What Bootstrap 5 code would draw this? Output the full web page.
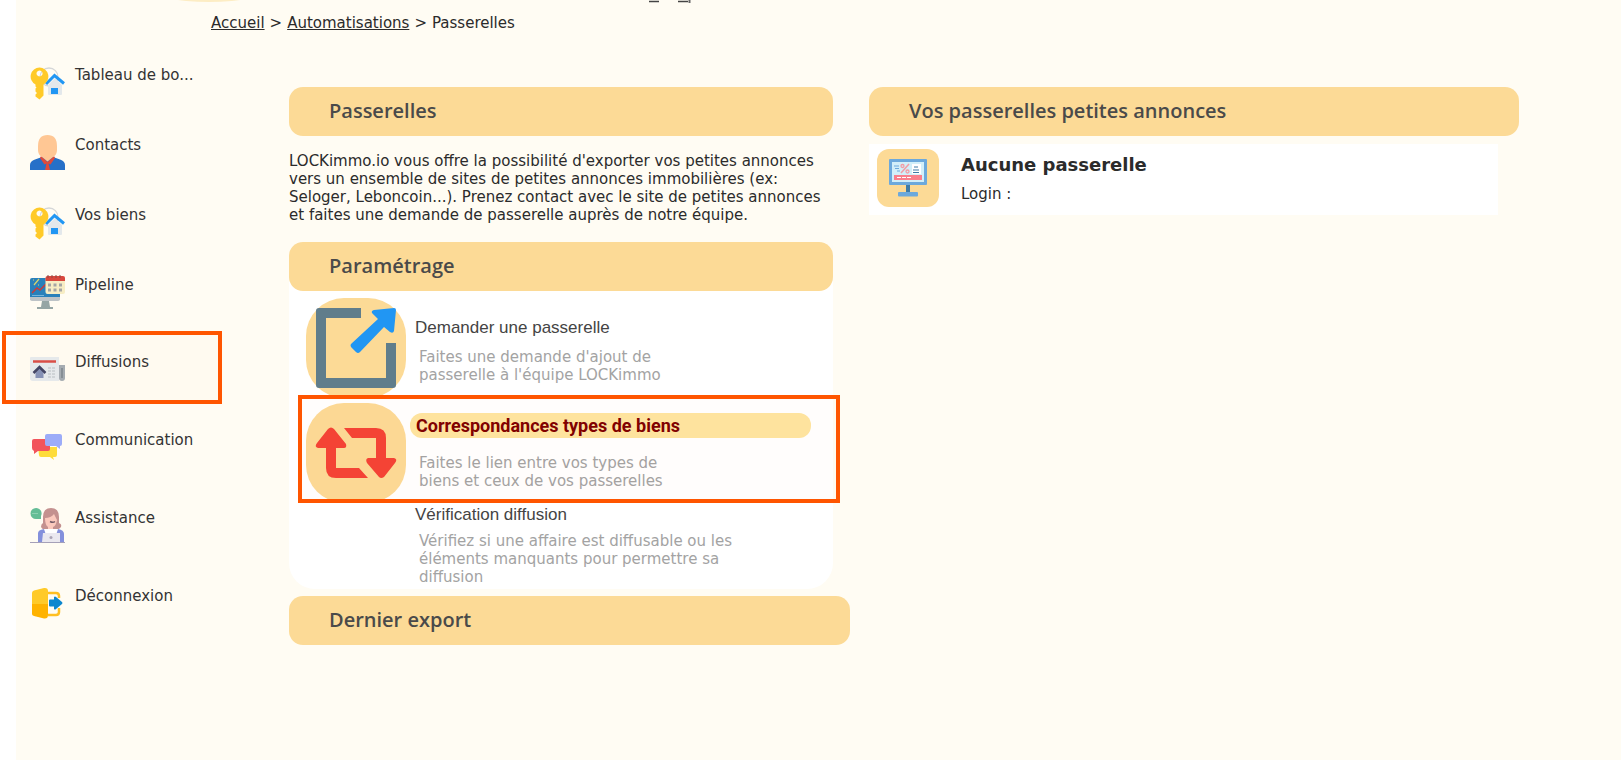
<!DOCTYPE html>
<html lang="fr">
<head>
<meta charset="utf-8">
<meta name="viewport" content="width=device-width, initial-scale=1">
<title>Passerelles</title>
<link href="https://cdn.jsdelivr.net/npm/bootstrap@5.3.0/dist/css/bootstrap.min.css" rel="stylesheet">
<style>
  body { font-family: "DejaVu Sans", Verdana, sans-serif; font-size: 15px; line-height: 18px; color: #2b2b2b; background: #fff; }
  .shell { margin-left: 16px; min-height: 100vh; background: #fffcf3; }
  a { color: inherit; }
  .topline { height: 14px; }
  .trail { padding-left: 195px; gap: 5px; }
  .side { width: 273px; padding: 33px 0 0 14px; }
  .side a { display: flex; gap: 10px; height: 35px; color: #333; text-decoration: none; position: relative; }
  .side a svg { flex: none; width: 35px; height: 35px; }
  .side a span { padding-top: 1px; }
  .side-near { display: grid; gap: 35px; }
  .side-far { display: grid; gap: 43px; padding-top: 42px; }
  .focus-box::after { content: ""; position: absolute; border: 4px solid #ff5500; background: rgba(255,85,0,.012); pointer-events: none; }
  .side .focus-box::after { left: -28px; top: -21px; width: 220px; height: 73px; }
  .main-grid { display: grid; grid-template-columns: minmax(0,561fr) minmax(0,650fr); gap: 19px; margin-right: 102px; padding-top: 55px; align-items: start; }
  .bar-title { margin: 0; height: 49px; padding-left: 40px; border-radius: 14px; background: #fcda96; color: #4a4a4a; font: 600 20px/48px "Open Sans", "Noto Sans", sans-serif; }
  .narrow { margin-right: 17px; }
  .intro { margin: 16px 17px 0 0; padding-bottom: 18px; }
  .panel { background: #fff; border-radius: 14px 14px 26px 26px; margin-bottom: 7px; padding-bottom: 3px; }
  .entries { padding-top: 7px; }
  .entry { position: relative; padding-left: 17px; gap: 4px; color: #444; }
  .entry-tall { height: 105px; }
  .entry .tile { flex: none; width: 100px; height: 100px; }
  .entry h3 { margin: 0; padding-left: 5px; font: 17px/24px "Liberation Sans", Arial, sans-serif; }
  .entry h3 a { color: inherit; text-decoration: none; }
  .entry h3.hot { width: 401px; max-width: 100%; padding-left: 6px; border-radius: 12px; background: #fee5a0; color: #800000; font: 700 18px/25px Roboto, sans-serif; }
  .entry p { margin: 0; padding-left: 9px; width: 350px; color: #a3a3a3; }
  .entry-tall p { width: 280px; }
  .first-body { padding-top: 18px; }
  .hot-body { padding-top: 10px; }
  .last-entry { margin-top: -5px; }
  .last-entry p { padding-top: 5px; }
  .entry.focus-box::after { left: 9px; right: -7px; top: -8px; height: 108px; }
  .gateway { background: #fff; margin: 8px 21px 0 0; height: 71px; padding: 5px 8px; gap: 22px; }
  .gateway svg { flex: none; width: 62px; height: 58px; }
  .gateway h3 { margin: 0; padding: 6px 0 10px; font-size: 18px; line-height: 20px; font-weight: 700; }
</style>
</head>
<body>
<svg width="0" height="0" class="d-none" aria-hidden="true">
  <symbol id="keyhouse" viewBox="0 0 35 35">
    <circle cx="19" cy="12" r="9" fill="none" stroke="#d5d7d8" stroke-width="1.3"/>
    <path d="M18 20 25 13l7 7v9q0 1-1 1H19q-1 0-1-1z" fill="#e3e8eb"/>
    <rect x="21" y="23" width="7" height="6" fill="#2196f3"/>
    <path d="M16 19 24.500 10.500 34 18.500" fill="none" stroke="#2196f3" stroke-width="3"/>
    <path fill="#ffca28" fill-rule="evenodd" d="M9.500 2.500a9 9 0 0 1 4 17v11l-4 4-4-3v-2l1.500-1.500-1.500-1.500v-3l1-1-1-1v-2a9 9 0 0 1 4-17m0 3a3 3 0 1 0 .1 0"/>
  </symbol>
</svg>
<div class="shell">
  <svg class="d-block w-100 topline" aria-hidden="true"><ellipse cx="193" cy="-12" rx="60" ry="14" fill="#fdedc4"/><path d="M633 1.500h10M662 1.500h10" stroke="#444" stroke-width="1.300"/><path d="M673.500 0v3" stroke="#666" stroke-width="2"/></svg>
  <nav class="trail d-flex" aria-label="Fil d'Ariane">
    <a href="#">Accueil</a><span>&gt;</span><a href="#">Automatisations</a><span>&gt;</span><span>Passerelles</span>
  </nav>
  <div class="d-flex align-items-start">
    <nav class="side flex-shrink-0" aria-label="Menu">
      <div class="side-near">
        <a href="#"><svg><use href="#keyhouse"/></svg><span>Tableau de bo...</span></a>
        <a href="#"><svg viewBox="0 0 35 35"><path fill="#2670c8" d="M0 35v-5q0-4 5-5.500L12 22h11l7 2.500q5 1.500 5 5.500v5z"/><path fill="#e04a3a" d="m11 21 6.500 6 6.500-6 1 2-4.500 6.500-2-1L20 35h-5l1.500-6.500-2 1L10 23z"/><path fill="#ffc794" d="M8 11q0-11 9.500-11T27 11v4q0 5-4 7l-5.500 4.500L12 22q-4-2-4-7z"/></svg><span>Contacts</span></a>
        <a href="#"><svg><use href="#keyhouse"/></svg><span>Vos biens</span></a>
        <a href="#"><svg viewBox="0 0 35 35"><path fill="#95a5a5" d="M12 26h7l1 6h3v2H7v-2h4z"/><rect y="3" width="30" height="22" rx="2" fill="#2980ba"/><path fill="#bdc3c7" d="M0 22h30v2q0 2-2 2H2q-2 0-2-2z"/><path d="m2 18 5-5 3 2 6-6" fill="none" stroke="#c63c3c" stroke-width="1.500"/><path d="m4 10 5-6M3 5h1M8 10h1" stroke="#d9d36b" stroke-width="1.200"/><path d="M2 20.500h12" stroke="#76b5dc"/><rect x="15.500" y="2" width="19.500" height="17" rx="2" fill="#f7edc4"/><path d="M15.500 6V3q0-2 2-2H33q2 0 2 2v3z" fill="#d9473d"/><path d="M18 0v3m4-3v3m4-3v3m4-3v3" stroke="#8a4a45"/><path d="M18 10h14M18 15h14" stroke="#a5a5a5" stroke-width="3" stroke-dasharray="3 2.500"/></svg><span>Pipeline</span></a>
      </div>
      <div class="side-far">
        <a href="#" class="focus-box"><svg viewBox="0 0 35 35"><path fill="#e6ebee" d="M1 5h28v24H3q-3 0-3-3V6q0-1 1-1"/><path fill="#a4adb4" d="M29 13h6v13q0 3-3 3t-3-3z"/><path d="M3 9.500h23" stroke="#d94f48" stroke-width="2.500"/><path fill="#8592b8" d="M9.500 15 15 20h-1.500v6h-8v-6H4z"/><path d="m3.500 21 6-6 6 6" fill="none" stroke="#414566" stroke-width="2.500"/><path d="M18 16h8M18 19h8M18 22h8M18 25h8" stroke="#b9c0c5" stroke-dasharray="3 1"/><path d="M32 16v10" stroke="#858f97" stroke-width="2"/></svg><span>Diffusions</span></a>
        <a href="#"><svg viewBox="0 0 35 35"><path fill="#fedc3a" d="M8 17h19v8q0 2-2 2h-2l1 3-4-3H11q-2 0-2-2z"/><path fill="#f2545b" d="M4 9h14q2 0 2 2v8q0 2-2 2H8l-4 3v-3q-2-1-2-3v-7q0-2 2-2"/><path fill="#9cacf8" d="M17 4h13q2 0 2 2v8q0 2-2 2v3l-4-3h-9q-2 0-2-2V6q0-2 2-2"/></svg><span>Communication</span></a>
        <a href="#"><svg viewBox="0 0 35 35"><path fill="#65bd96" d="M6 0a5.500 5.500 0 0 1 5 8v3H6A5.500 5.500 0 0 1 6 0"/><path d="M2.500 5.500h6" stroke="#b7e2cd" stroke-dasharray="1 1"/><path fill="#c4918f" d="M13 9q0-9 8-9t8 9v6q3 1 2 4-2 3-6 2h-8q-5 1-6-2 0-3 2-4z"/><path fill="#fbc9bd" d="M15 10q6 0 9-4 2 4 3 6-1 6-4 7v3h-5v-3q-3-2-3-9"/><path d="M20 13.500q3 1.500 5 0" stroke="#745a67" fill="none" stroke-width="1.500"/><path fill="#8490dc" d="M8 34V25q0-3 6-4h14q6 1 6 5v8z"/><path fill="#fff" d="M14 21h14l-2 6H16z"/><path fill="#eae8ef" d="M13 25h17v9H12z"/><circle cx="21" cy="29.500" r="1.500" fill="#aaa4b5"/><path d="M0 34.500h35" stroke="#a5a0b8"/></svg><span>Assistance</span></a>
        <a href="#"><svg viewBox="0 0 35 35"><path d="M18 7h8q3 0 3 3v2M29 22v4q0 3-3 3h-8" fill="none" stroke="#ffbf22" stroke-width="2.500"/><path fill="#ffca28" d="M4 4.500 14 2q4-.5 4 3v13H2V7q0-2 2-2.500"/><path fill="#ffb300" d="M2 18h16v11q0 4-4 3.500L4 30q-2-.5-2-2z"/><path fill="#0d87ce" d="M20 13.500h4V11q1-1 2 0l6 5q1 1 0 2l-6 5q-1 1-2 0v-2.500h-4q-1 0-1-1v-5q0-1 1-1"/></svg><span>Déconnexion</span></a>
      </div>
    </nav>
    <main class="main-grid flex-grow-1">
      <div>
        <h2 class="bar-title narrow">Passerelles</h2>
        <p class="intro">LOCKimmo.io vous offre la possibilité d'exporter vos petites annonces vers un ensemble de sites de petites annonces immobilières (ex: Seloger, Leboncoin...). Prenez contact avec le site de petites annonces et faites une demande de passerelle auprès de notre équipe.</p>
        <section class="panel narrow">
          <h2 class="bar-title">Paramétrage</h2>
          <div class="entries">
            <div class="entry entry-tall d-flex">
              <svg class="tile" viewBox="0 0 100 100"><rect width="100" height="100" rx="38" fill="#fcda96"/><path fill="#607d8b" d="M13 10h42v10H20v60h60V45h10v42q0 3-3 3H13q-3 0-3-3V13q0-3 3-3"/><path fill="#2196f3" d="M68 12 88 10q2 0 2 2l-2 21q-1 3-4 1l-6-5-24 25q-2 2-4 0l-5-5q-1-2 0-3l27-25-6-6q-1-2 2-3"/></svg>
              <div class="first-body"><h3><a href="#">Demander une passerelle</a></h3><p class="pt-2">Faites une demande d'ajout de passerelle à l'équipe LOCKimmo</p></div>
            </div>
            <div class="entry entry-tall d-flex focus-box">
              <svg class="tile" viewBox="0 0 100 100"><rect width="100" height="100" rx="38" fill="#fcda96"/><path fill="#f44336" d="M12 26q3-3 6 0l12 15q1 4-2 4h-8v20h23l9 10H20q-10 0-10-10V45H2q-4-1-1-5zM28 25h32q10 0 10 10v20h8q4 1 1 5L68 74q-3 2-5 0L51 60q-2-4 1-5h8V35H36z" transform="translate(10)"/></svg>
              <div class="flex-grow-1 pe-2 hot-body"><h3 class="hot"><a href="#">Correspondances types de biens</a></h3><p class="pt-3">Faites le lien entre vos types de biens et ceux de vos passerelles</p></div>
            </div>
            <div class="entry last-entry d-flex">
              <div class="tile h-auto"></div>
              <div><h3><a href="#">Vérification diffusion</a></h3><p>Vérifiez si une affaire est diffusable ou les éléments manquants pour permettre sa diffusion</p></div>
            </div>
          </div>
        </section>
        <h2 class="bar-title">Dernier export</h2>
      </div>
      <div>
        <h2 class="bar-title">Vos passerelles petites annonces</h2>
        <div class="gateway d-flex">
          <svg viewBox="0 0 62 58"><rect width="62" height="58" rx="12" fill="#fcda96"/><path fill="#3f7ba6" d="M29 35h4v9h-4z"/><rect x="21" y="43" width="20" height="4.500" rx="1" fill="#6ca9dc"/><rect x="12" y="10" width="38" height="26" rx="1" fill="#6ca9dc"/><rect x="15" y="13" width="32" height="20" fill="#d2eff9"/><rect x="17" y="26" width="28" height="5" fill="#f97f8c"/><rect x="35" y="15" width="9" height="10" fill="#fff"/><path d="M17 17h5m-4 2.500h4m-2 2.500h3" stroke="#6ca9dc"/><path d="m24 24 8-9" stroke="#f29ca5" stroke-width="1.500"/><g fill="none" stroke="#f29ca5" stroke-width="1.300"><circle cx="25.500" cy="17" r="1.500"/><circle cx="30.500" cy="22.500" r="1.500"/></g><path d="M37 18h4m-5 3h6m-6 2.500h6" stroke="#3f7ba6"/><path d="M20 28.500h14" stroke="#fff" stroke-dasharray="4 1"/></svg>
          <div><h3>Aucune passerelle</h3><div>Login :</div></div>
        </div>
      </div>
    </main>
  </div>
</div>
<script src="https://cdn.jsdelivr.net/npm/bootstrap@5.3.0/dist/js/bootstrap.bundle.min.js"></script>
</body>
</html>
